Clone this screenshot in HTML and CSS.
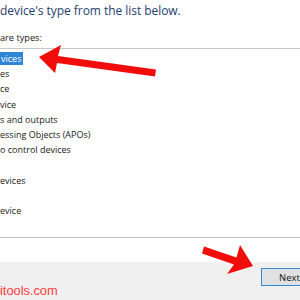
FILE: index.html
```html
<!DOCTYPE html>
<html>
<head>
<meta charset="utf-8">
<link rel="stylesheet" href="styles.css">
</head>
<body>
<div class="page">
  <h1 class="title">device's type from the list below.</h1>
  <p class="label">are types:</p>
  <div class="listbox">
    <ul class="items">
      <li><span class="sel">vices</span></li>
      <li>es</li>
      <li>ce</li>
      <li>vice</li>
      <li>s and outputs</li>
      <li>essing Objects (APOs)</li>
      <li>o control devices</li>
      <li>&nbsp;</li>
      <li>evices</li>
      <li>&nbsp;</li>
      <li>evice</li>
    </ul>
  </div>
  <div class="footer">
    <span class="watermark">itools.com</span>
    <button class="next">Next</button>
  </div>
  <svg class="arrows" width="300" height="300" viewBox="0 0 300 300">
    <polygon fill="#f20d0d" points="39,57 61,45 58,56 156,69.5 155,76.5 57,63 55,73"/>
    <polygon fill="#f20d0d" points="253,266 240,245 236.5,257.5 204,246.5 202,253.5 234,264.5 227,274"/>
  </svg>
</div>
</body>
</html>
```

FILE: styles.css
```css
html, body {
  margin: 0;
  padding: 0;
  background: #ffffff;
  overflow: hidden;
}
.page {
  position: relative;
  width: 300px;
  height: 300px;
  overflow: hidden;
  font-family: "Open Sans", "Noto Sans", sans-serif;
}
.title {
  margin: 0;
  padding: 3px 0 0 0;
  font-weight: 400;
  font-size: 12px;
  line-height: 16px;
  color: #1f3d72;
  letter-spacing: -0.05px;
}
.label {
  margin: 0;
  padding-top: 13px;
  font-size: 9.2px;
  line-height: 12px;
  color: #1a1a1a;
}
.listbox {
  margin-top: 4px;
  width: 320px;
  height: 188px;
  border-top: 1px solid #c8c8c8;
  border-bottom: 1px solid #c0c0c0;
}
.items {
  list-style: none;
  margin: 0;
  padding: 2px 0 0 0;
}
.items li {
  height: 15.2px;
  line-height: 15.2px;
  font-size: 9px;
  color: #1a1a1a;
  white-space: nowrap;
}
.sel {
  display: inline-block;
  background: #2f86d6;
  color: #ffffff;
  padding: 0 2px 0 1px;
  height: 13px;
  line-height: 13px;
  margin-top: 1px;
  vertical-align: top;
}
.footer {
  margin-top: 24px;
  height: 40px;
  background: #f0f0f0;
  display: grid;
  grid-template-columns: 261px 75px;
  align-items: start;
  padding-top: 6px;
  box-sizing: border-box;
  width: 340px;
}
.watermark {
  margin-top: 16px;
  font-family: "Liberation Sans", Arial, sans-serif;
  font-size: 12.8px;
  line-height: 14px;
  color: #ff3a3a;
}
.next {
  height: 18px;
  width: 75px;
  margin: 0;
  padding: 0 0 0 17px;
  background: #e1e1e1;
  border: 1px solid #3b86c9;
  box-shadow: inset 0 0 0 1px #d6e6f5;
  font-family: "Open Sans", "Noto Sans", sans-serif;
  font-size: 9.5px;
  line-height: 15px;
  color: #111;
  text-align: left;
}
.arrows {
  position: absolute;
  left: 0;
  top: 0;
  pointer-events: none;
}
```
